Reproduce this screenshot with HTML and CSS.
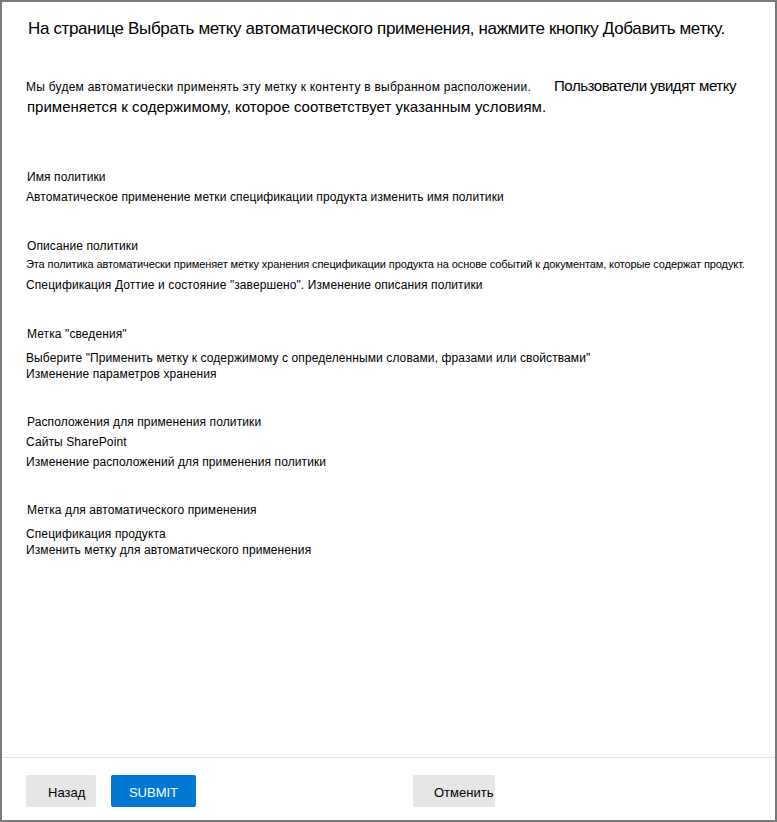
FILE: index.html
```html
<!DOCTYPE html>
<html lang="ru">
<head>
<meta charset="utf-8">
<title>Автоматическое применение метки</title>
<link rel="stylesheet" href="styles.css">
</head>
<body>
<div class="frame">
  <main class="content">
    <h1 class="title">На странице Выбрать метку автоматического применения, нажмите кнопку Добавить метку.</h1>
    <div class="intro">
      <div class="intro-line"><span class="intro-small">Мы будем автоматически применять эту метку к контенту в выбранном расположении.</span><span class="intro-big">Пользователи увидят метку</span></div>
      <div class="intro-line intro-big-line">применяется к содержимому, которое соответствует указанным условиям.</div>
    </div>

    <section class="field field-name">
      <div class="label">Имя политики</div>
      <div class="value">Автоматическое применение метки спецификации продукта изменить имя политики</div>
    </section>

    <section class="field field-desc">
      <div class="label">Описание политики</div>
      <div class="value value-tiny">Эта политика автоматически применяет метку хранения спецификации продукта на основе событий к документам, которые содержат продукт.</div>
      <div class="value value-gap">Спецификация Доттие и состояние "завершено". Изменение описания политики</div>
    </section>

    <section class="field field-info">
      <div class="label">Метка "сведения"</div>
      <div class="value value-tight value-first">Выберите "Применить метку к содержимому с определенными словами, фразами или свойствами"</div>
      <div class="value value-tight">Изменение параметров хранения</div>
    </section>

    <section class="field field-loc">
      <div class="label">Расположения для применения политики</div>
      <div class="value">Сайты SharePoint</div>
      <div class="value">Изменение расположений для применения политики</div>
    </section>

    <section class="field field-label">
      <div class="label">Метка для автоматического применения</div>
      <div class="value value-tight value-first">Спецификация продукта</div>
      <div class="value value-tight">Изменить метку для автоматического применения</div>
    </section>
  </main>

  <footer class="footer">
    <div class="btn-group">
      <button class="btn btn-default btn-back" type="button">Назад</button>
      <button class="btn btn-primary" type="button">SUBMIT</button>
    </div>
    <button class="btn btn-default btn-cancel" type="button">Отменить</button>
  </footer>
</div>
</body>
</html>
```

FILE: styles.css
```css
* {
  box-sizing: border-box;
}

html, body {
  margin: 0;
  padding: 0;
  background: #ffffff;
}

body {
  font-family: "Liberation Sans", Arial, sans-serif;
  color: #000000;
}

.frame {
  width: 777px;
  height: 822px;
  border: 2px solid #7a7a7a;
  display: flex;
  flex-direction: column;
}

.content {
  flex: 1;
  padding: 17px 0 0 24px;
}

.title {
  margin: 0 0 0 2px;
  font-size: 17px;
  font-weight: normal;
  line-height: 20px;
  letter-spacing: -0.35px;
  white-space: nowrap;
}

.intro {
  margin-top: 36px;
}

.intro-line {
  line-height: 21px;
  height: 21px;
  white-space: nowrap;
}

.intro-small {
  font-size: 12px;
  letter-spacing: 0.25px;
}

.intro-big {
  font-size: 15px;
  margin-left: 23px;
  letter-spacing: -0.44px;
}

.intro-big-line {
  font-size: 15px;
  letter-spacing: 0;
  padding-left: 1px;
}

.field {
  display: flex;
  flex-direction: column;
}

.field-name { margin-top: 50px; }
.field-desc { margin-top: 29px; }
.field-info { margin-top: 29px; }
.field-loc { margin-top: 30px; }
.field-label { margin-top: 28px; }

.label {
  font-size: 12px;
  line-height: 20px;
  letter-spacing: 0.1px;
  padding-left: 1px;
}

.value {
  font-size: 12px;
  line-height: 20px;
  letter-spacing: 0.1px;
  white-space: nowrap;
}

.value-tiny {
  font-size: 11px;
  line-height: 16px;
  letter-spacing: -0.1px;
}

.value-gap {
  margin-top: 3px;
}

.value-tight {
  line-height: 16px;
}

.value-first {
  margin-top: 6px;
}

.footer {
  height: 63px;
  border-top: 1px solid #e1e1e1;
  padding: 17px 0 0 24px;
  display: flex;
  align-items: flex-start;
}

.btn-group {
  display: flex;
  gap: 15px;
}

.btn {
  height: 32px;
  border: none;
  border-radius: 2px;
  font-family: "Liberation Sans", Arial, sans-serif;
  font-size: 13px;
  padding: 2px 0 0 0;
  text-align: left;
  white-space: nowrap;
  cursor: pointer;
}

.btn-default {
  background: #e6e6e6;
  color: #000000;
}

.btn-back {
  width: 70px;
  padding-left: 22px;
}

.btn-primary {
  width: 85px;
  background: #0078d4;
  color: #ffffff;
  text-align: center;
}

.btn-cancel {
  width: 82px;
  margin-left: 217px;
  padding-left: 21px;
  overflow: visible;
}
```
